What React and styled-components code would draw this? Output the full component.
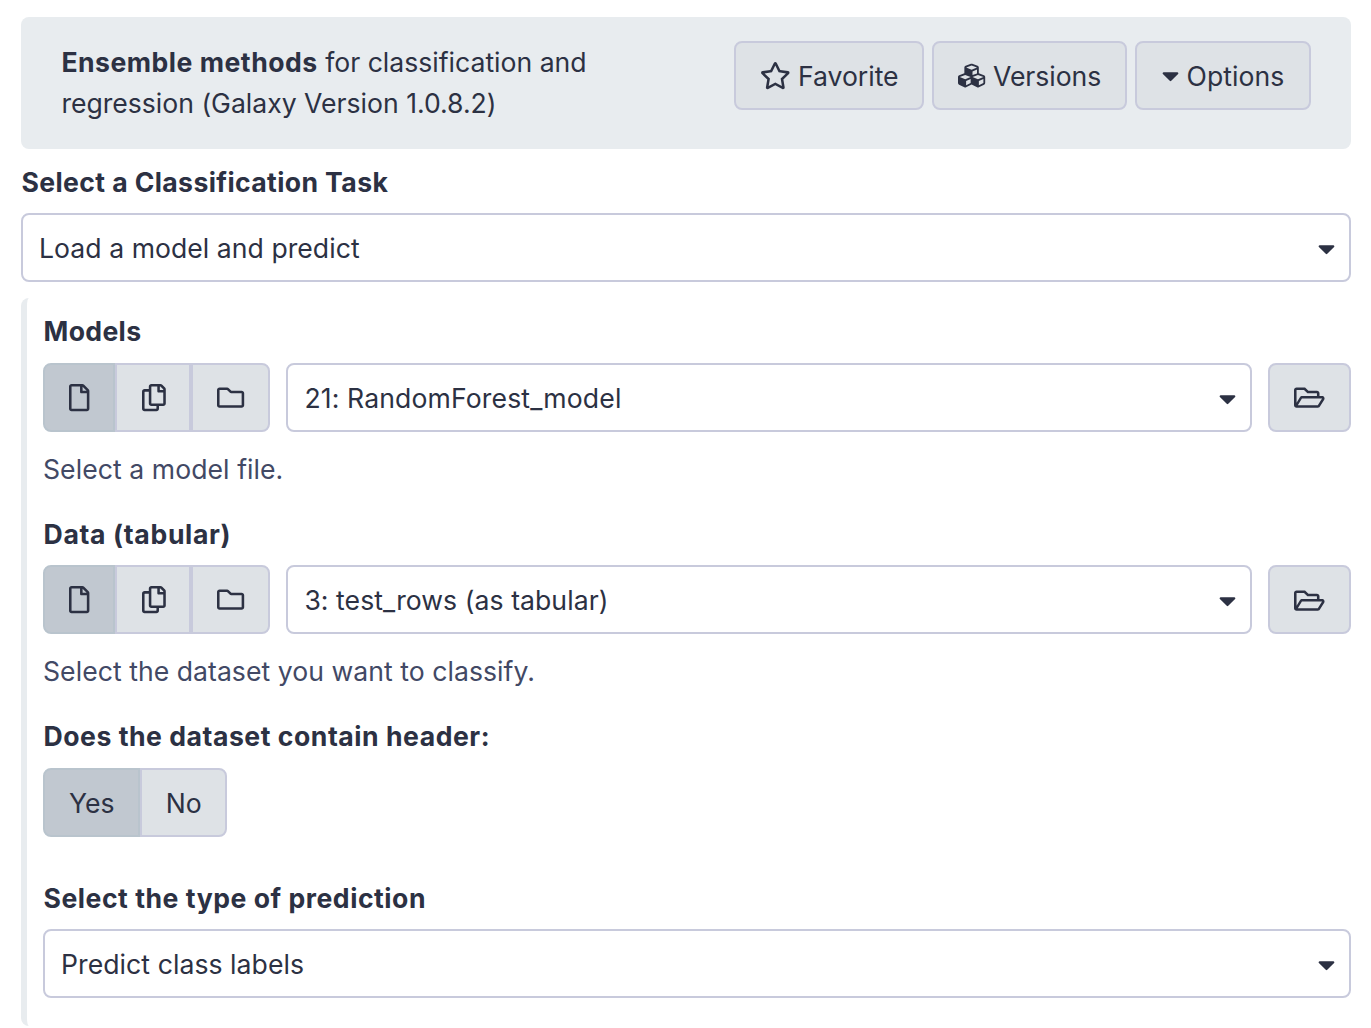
import React from "react";
import styled, { createGlobalStyle } from "styled-components";
import {
  FaRegStar,
  FaCubes,
  FaCaretDown,
  FaRegFile,
  FaRegCopy,
  FaRegFolder,
  FaRegFolderOpen,
} from "react-icons/fa";

const ink = "#2c3143";
const line = "#c8cadc";
const face = "#dee2e6";
const bar = "#e8ecef";

const GlobalStyle = createGlobalStyle`
  * { box-sizing: border-box; }
  body {
    margin: 0;
    background: #fff;
    color: ${ink};
    font: 400 27.2px/40.8px Inter, "Liberation Sans", sans-serif;
    overflow: hidden;
  }
  button { font: inherit; color: inherit; margin: 0; }
`;

const Page = styled.main`
  width: 1371px;
  height: 1028px;
  padding: 17px 20px 0 21px;
  display: flex;
  flex-direction: column;
`;

const Header = styled.header`
  height: 132px;
  flex: none;
  padding: 24px 40px;
  border-radius: 8px;
  background: ${bar};
  display: flex;
  justify-content: space-between;
  align-items: flex-start;
`;

const Title = styled.h1`
  margin: 0.6px 0 0;
  padding-left: 0.4px;
  font-size: 27.2px;
  font-weight: 400;
  width: 600px;
`;

const Text = styled.span`
  white-space: nowrap;
  font-size: 26.6px;
  font-weight: ${(p) => (p.$bold ? 700 : 400)};
  letter-spacing: ${(p) => p.$ls ?? (p.$bold ? 0.53 : 0.06)}px;
`;

const Actions = styled.div`
  display: flex;
  gap: 8px;
`;

const Button = styled.button`
  width: ${(p) => p.$w}px;
  height: 69px;
  padding: 1px 0 0;
  display: flex;
  align-items: center;
  justify-content: center;
  gap: 8px;
  border: 2px solid ${line};
  border-radius: 8px;
  background: ${face};
`;

const Icon = styled.span`
  display: flex;
  svg {
    width: ${(p) => p.$w}px;
    height: 27.2px;
    overflow: visible;
  }
`;

const Label = styled.div`
  height: ${(p) => p.$h ?? 41}px;
  margin-top: ${(p) => p.$top ?? 0}px;
  padding-left: 0.5px;
`;

const Help = styled.div`
  height: 41px;
  margin-top: 17px;
  color: #424965;
`;

const Select = styled.div`
  flex: ${(p) => (p.$grow ? 1 : "none")};
  height: 69px;
  margin-top: ${(p) => p.$top ?? 0}px;
  padding: 1px 14px 0 16px;
  display: flex;
  align-items: center;
  justify-content: space-between;
  border: 2px solid ${line};
  border-radius: 8px;
  background: #fff;

  ${Icon} { margin-top: 1px; }
`;

const Section = styled.section`
  height: 728px;
  margin-top: 16px;
  padding: 12.6px 0 0 16px;
  border-left: 6px solid ${bar};
  border-radius: 8px;
`;

const Row = styled.div`
  display: flex;
  gap: 16px;
  margin-top: 11.4px;
`;

const Group = styled.div`
  display: flex;
`;

const Segment = styled.button`
  width: ${(p) => p.$w}px;
  height: 69px;
  padding: ${(p) => p.$pad ?? "0 0 0 0.6px"};
  display: flex;
  align-items: center;
  justify-content: center;
  border: 2px solid ${(p) => (p.$active ? "#b9c4cd" : line)};
  background: ${(p) => (p.$active ? "#c1c8d0" : face)};
  &:first-child { border-radius: 8px 0 0 8px; }
  &:last-child { border-radius: 0 8px 8px 0; }
`;

const Caret = () => (
  <Icon $w={17}>
    <FaCaretDown viewBox="0 0 320 512" />
  </Icon>
);

const SelectBox = ({ text, ls, ...rest }) => (
  <Select {...rest}>
    <Text $ls={ls}>{text}</Text>
    <Caret />
  </Select>
);

const DataPicker = ({ text, ls }) => (
  <Row>
    <Group>
      <Segment $active $w={72.4}>
        <Icon $w={20.4}><FaRegFile /></Icon>
      </Segment>
      <Segment $w={75.8}>
        <Icon $w={23.8}><FaRegCopy /></Icon>
      </Segment>
      <Segment $w={79.2}>
        <Icon $w={27.2}><FaRegFolder /></Icon>
      </Segment>
    </Group>
    <SelectBox $grow text={text} ls={ls} />
    <Button $w={82.6}>
      <Icon $w={30.6}><FaRegFolderOpen /></Icon>
    </Button>
  </Row>
);

export default function App() {
  return (
    <>
      <GlobalStyle />
      <Page>
        <Header>
          <Title>
            <Text $bold $ls={0.5}>Ensemble methods</Text>
            <Text $ls={0}> for classification and</Text>
            <br />
            <Text $ls={-0.01}>regression (Galaxy Version 1.0.8.2)</Text>
          </Title>
          <Actions>
            <Button $w={190}>
              <Icon $w={30.6}><FaRegStar /></Icon>
              <Text $ls={-0.05}>Favorite</Text>
            </Button>
            <Button $w={195}>
              <Icon $w={27.2}><FaCubes /></Icon>
              <Text $ls={-0.05}>Versions</Text>
            </Button>
            <Button $w={176}>
              <Caret />
              <Text>Options</Text>
            </Button>
          </Actions>
        </Header>

        <Label $top={13}><Text $bold $ls={0.38}>Select a Classification Task</Text></Label>
        <SelectBox $top={10} text="Load a model and predict" ls={0.04} />

        <Section>
          <Label><Text $bold $ls={0.35}>Models</Text></Label>
          <DataPicker text="21: RandomForest_model" ls={0.13} />
          <Help><Text>Select a model file.</Text></Help>

          <Label $top={24} $h={40}><Text $bold $ls={0.67}>Data (tabular)</Text></Label>
          <DataPicker text="3: test_rows (as tabular)" />
          <Help><Text $ls={0.04}>Select the dataset you want to classify.</Text></Help>

          <Label $top={24} $h={40}><Text $bold>Does the dataset contain header:</Text></Label>
          <Row>
            <Group>
              <Segment $active $w={97} $pad="2px 0 0 0.6px"><Text>Yes</Text></Segment>
              <Segment $w={87} $pad="2px 0 0 0.6px"><Text>No</Text></Segment>
            </Group>
          </Row>

          <Label $top={41}><Text $bold>Select the type of prediction</Text></Label>
          <SelectBox $top={10.4} text="Predict class labels" />
        </Section>
      </Page>
    </>
  );
}
